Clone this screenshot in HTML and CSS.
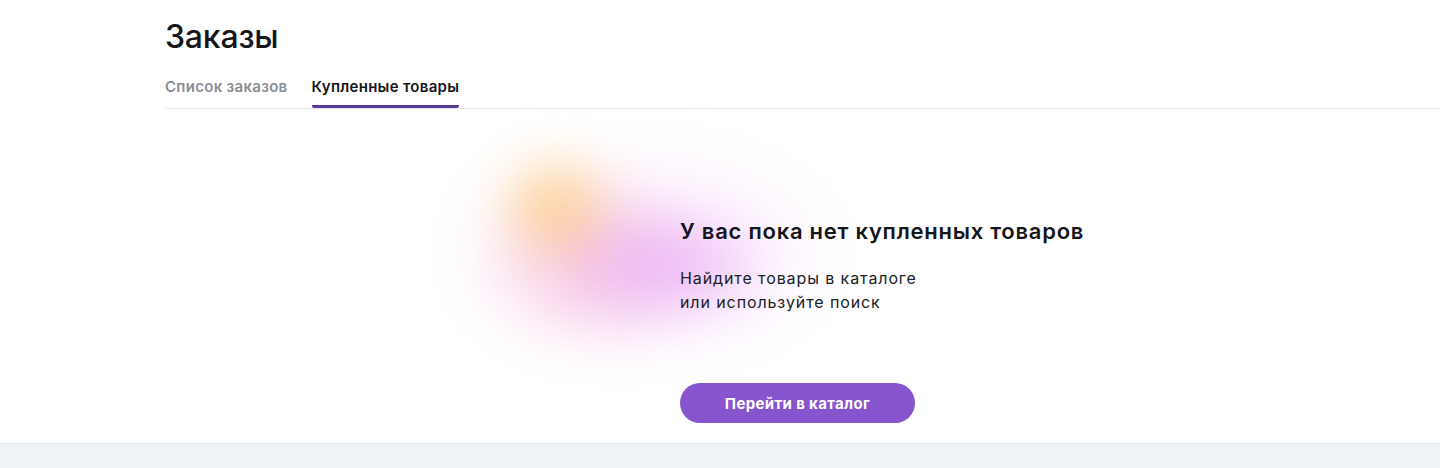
FILE: index.html
```html
<!DOCTYPE html>
<html lang="ru">

<head>
	<meta charset="UTF-8">
	<meta name="viewport" content="width=device-width, initial-scale=1.0">
	<title>Заказы</title>
	<link rel="stylesheet" href="styles.css">
</head>

<body>

	<main class="page">
		<h1 class="page-title">Заказы</h1>

		<nav class="tabs">
			<a class="tab" href="#">Список заказов</a>
			<a class="tab tab-active" href="#">Купленные товары</a>
		</nav>

		<section class="empty">
			<div class="empty-content">
				<div class="empty-blob"></div>
				<h2 class="empty-title">У вас пока нет купленных товаров</h2>
				<p class="empty-text">Найдите товары в каталоге<br>или используйте поиск</p>
				<button class="btn-catalog" type="button">Перейти в каталог</button>
			</div>
		</section>
	</main>

	<footer class="footer"></footer>

</body>

</html>
```

FILE: styles.css
```css
body {
	margin: 0;
	font-family: Inter, "Noto Sans", Arial, sans-serif;
	color: #1a1a1a;
	background: #fff;
	min-height: 100vh;
	display: flex;
	flex-direction: column;
}

.page {
	padding: 17px 0 20px 165px;
}

.page-title {
	margin: 0;
	font-size: 32px;
	line-height: 40px;
	font-weight: 500;
	color: #15161a;
	letter-spacing: -0.2px;
}

.tabs {
	display: flex;
	gap: 24px;
	margin-top: 20px;
	border-bottom: 1px solid #e3e8ee;
}

.tab {
	font-size: 15px;
	line-height: 20px;
	font-weight: 600;
	letter-spacing: 0.3px;
	color: #8a8d93;
	text-decoration: none;
	padding-bottom: 8px;
	border-bottom: 3px solid transparent;
}

.tab-active {
	color: #15161a;
	border-bottom-color: #5b3a96;
	border-radius: 2px;
}

.empty {
	padding: 108px 0 0 515px;
}

.empty-content {
	position: relative;
	display: flex;
	flex-direction: column;
	align-items: flex-start;
}

.empty-blob {
	position: absolute;
	left: -225px;
	top: -85px;
	width: 390px;
	height: 240px;
	filter: blur(22px);
	background:
		radial-gradient(ellipse 70px 65px at 100px 75px, rgba(253, 205, 130, 0.95), rgba(253, 205, 130, 0) 100%),
		radial-gradient(ellipse 120px 72px at 210px 135px, rgba(236, 178, 247, 0.95), rgba(236, 178, 247, 0) 100%),
		radial-gradient(ellipse 120px 95px at 135px 130px, rgba(248, 192, 218, 0.9), rgba(248, 192, 218, 0) 100%),
		radial-gradient(ellipse 215px 120px at 185px 120px, rgba(245, 212, 250, 0.55), rgba(245, 212, 250, 0) 100%);
	z-index: 0;
}

.empty-title,
.empty-text,
.btn-catalog {
	position: relative;
	z-index: 1;
}

.empty-title {
	margin: 0;
	font-size: 22px;
	line-height: 28px;
	font-weight: 600;
	letter-spacing: 0.75px;
	color: #15161a;
}

.empty-text {
	margin: 21px 0 0;
	font-size: 16px;
	line-height: 24px;
	letter-spacing: 0.9px;
	color: #202125;
}

.btn-catalog {
	margin-top: 69px;
	width: 235px;
	height: 40px;
	border: none;
	border-radius: 20px;
	background-color: #8654cc;
	color: #fff;
	font-family: inherit;
	font-size: 15px;
	font-weight: 700;
	letter-spacing: 0.35px;
	cursor: pointer;
}

.footer {
	flex: 1;
	background: #f0f3f6;
	border-top: 1px solid #e2e5e8;
}
```
